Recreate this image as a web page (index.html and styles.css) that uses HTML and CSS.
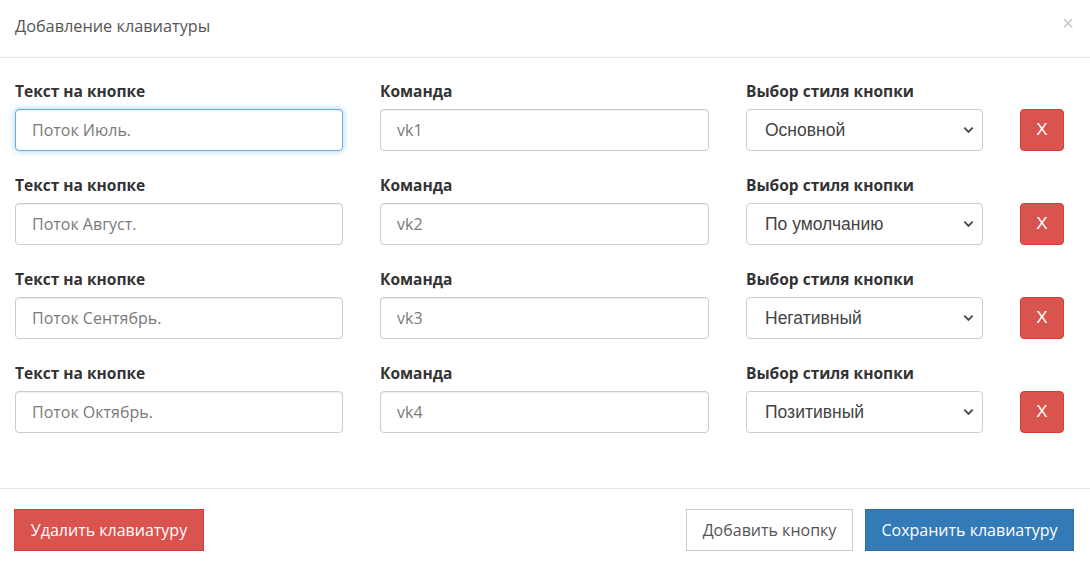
FILE: index.html
```html
<!DOCTYPE html>
<html lang="ru">
<head>
<meta charset="utf-8">
<link rel="stylesheet" href="styles.css">
</head>
<body>
<div class="modal">
  <div class="modal-header">
    <h4 class="modal-title">Добавление клавиатуры</h4>
    <span class="close">×</span>
  </div>
  <div class="modal-body">
    <div class="row">
      <div class="field"><label>Текст на кнопке</label><input class="form-control focus" placeholder="Поток Июль."></div>
      <div class="field"><label>Команда</label><input class="form-control" placeholder="vk1"></div>
      <div class="field"><label>Выбор стиля кнопки</label><div class="select"><span>Основной</span><svg viewBox="0 0 12 8" class="chev"><path d="M1.5 1.5 L6 6 L10.5 1.5" /></svg></div></div>
      <button class="btn-x">X</button>
    </div>
    <div class="row">
      <div class="field"><label>Текст на кнопке</label><input class="form-control" placeholder="Поток Август."></div>
      <div class="field"><label>Команда</label><input class="form-control" placeholder="vk2"></div>
      <div class="field"><label>Выбор стиля кнопки</label><div class="select"><span>По умолчанию</span><svg viewBox="0 0 12 8" class="chev"><path d="M1.5 1.5 L6 6 L10.5 1.5" /></svg></div></div>
      <button class="btn-x">X</button>
    </div>
    <div class="row">
      <div class="field"><label>Текст на кнопке</label><input class="form-control" placeholder="Поток Сентябрь."></div>
      <div class="field"><label>Команда</label><input class="form-control" placeholder="vk3"></div>
      <div class="field"><label>Выбор стиля кнопки</label><div class="select"><span>Негативный</span><svg viewBox="0 0 12 8" class="chev"><path d="M1.5 1.5 L6 6 L10.5 1.5" /></svg></div></div>
      <button class="btn-x">X</button>
    </div>
    <div class="row">
      <div class="field"><label>Текст на кнопке</label><input class="form-control" placeholder="Поток Октябрь."></div>
      <div class="field"><label>Команда</label><input class="form-control" placeholder="vk4"></div>
      <div class="field"><label>Выбор стиля кнопки</label><div class="select"><span>Позитивный</span><svg viewBox="0 0 12 8" class="chev"><path d="M1.5 1.5 L6 6 L10.5 1.5" /></svg></div></div>
      <button class="btn-x">X</button>
    </div>
  </div>
  <div class="modal-footer">
    <button class="btn btn-danger">Удалить клавиатуру</button>
    <div class="right">
      <button class="btn btn-default">Добавить кнопку</button>
      <button class="btn btn-primary">Сохранить клавиатуру</button>
    </div>
  </div>
</div>
</body>
</html>
```

FILE: styles.css
```css
* { box-sizing: border-box; }
html, body { margin: 0; padding: 0; background: #fff; }
body {
  font-family: "Open Sans", "Roboto", sans-serif;
  color: #333;
  width: 1090px;
  height: 562px;
  overflow: hidden;
}
.modal { width: 1090px; }
.modal-header {
  height: 58px;
  border-bottom: 1px solid #e5e5e5;
  display: flex;
  align-items: center;
  justify-content: space-between;
  padding: 0 15px;
}
.modal-title {
  margin: 0;
  font-size: 16.3px;
  font-weight: 400;
  color: #555;
  padding-bottom: 6px;
}
.close {
  font-family: "Liberation Sans", sans-serif;
  font-size: 20px;
  color: #c8c8c8;
  padding-right: 1px;
  padding-bottom: 10px;
}
.modal-body {
  padding: 23px 15px 0 15px;
  height: 431px;
  border-bottom: 1px solid #e5e5e5;
  display: flex;
  flex-direction: column;
  gap: 24px;
}
.row {
  display: grid;
  grid-template-columns: 328px 329px 237px 44px;
  column-gap: 37px;
  align-items: end;
}
.field { display: flex; flex-direction: column; }
label {
  font-weight: 700;
  font-size: 15.5px;
  color: #333;
  line-height: 20px;
  margin-bottom: 8px;
}
.form-control {
  height: 42px;
  border: 1px solid #ccc;
  border-radius: 4px;
  padding: 0 16px;
  font-family: "Open Sans", "Roboto", sans-serif;
  font-size: 16px;
  color: #555;
  outline: none;
  box-shadow: inset 0 1px 1px rgba(0,0,0,.075);
}
.form-control::placeholder { color: #7a7a7a; }
.form-control.focus {
  border-color: #66afe9;
  box-shadow: inset 0 1px 1px rgba(0,0,0,.075), 0 0 6px rgba(102,175,233,.6);
}
.select {
  height: 42px;
  border: 1px solid #ccc;
  border-radius: 4px;
  display: flex;
  align-items: center;
  justify-content: space-between;
  padding: 0 8px 0 18px;
  font-family: "Liberation Sans", Arial, sans-serif;
  font-size: 17.5px;
  color: #444;
}
.chev { width: 11px; height: 8px; }
.chev path { fill: none; stroke: #444; stroke-width: 2; }
.btn-x {
  height: 42px;
  width: 44px;
  border: 1px solid #d43f3a;
  background: #d9534f;
  color: #fff;
  border-radius: 4px;
  font-family: "Liberation Sans", Arial, sans-serif;
  font-size: 17px;
  padding: 0;
}
.modal-footer {
  display: flex;
  justify-content: space-between;
  align-items: center;
  padding: 20px 16px 0 14px;
}
.right { display: flex; gap: 12px; }
.btn {
  height: 42px;
  padding: 0;
  font-family: "Open Sans", "Roboto", sans-serif;
  font-size: 16px;
  border-radius: 0;
  border: 1px solid transparent;
  white-space: nowrap;
  text-align: center;
}
.btn-danger { background: #d9534f; border-color: #d43f3a; color: #fff; width: 190px; }
.btn-default { background: #fff; border-color: #ccc; color: #555; width: 167px; }
.btn-primary { background: #337ab7; border-color: #2e6da4; color: #fff; width: 209px; }
```
